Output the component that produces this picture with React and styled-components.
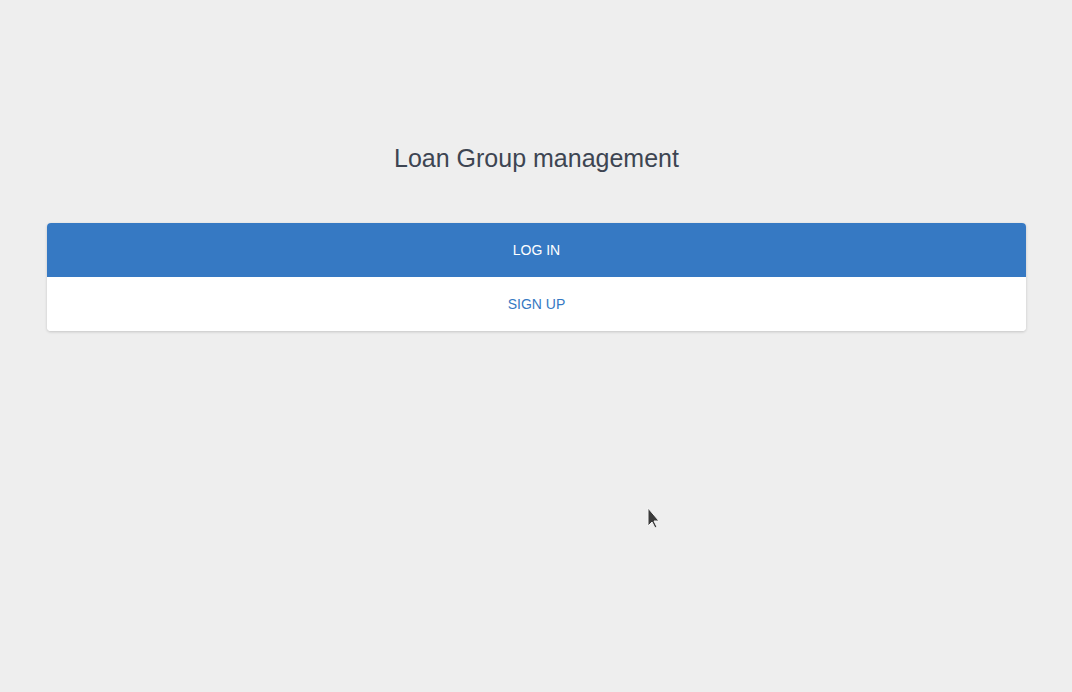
import React from "react";
import styled, { createGlobalStyle } from "styled-components";

const GlobalStyle = createGlobalStyle`
  html, body {
    margin: 0;
    padding: 0;
    background: #eeeeee;
    font-family: "Liberation Sans", Arial, sans-serif;
  }
`;

const Page = styled.div`
  position: relative;
  height: 692px;
  padding: 0 46px 0 47px;
  display: flex;
  flex-direction: column;
  align-items: stretch;
`;

const Title = styled.h1`
  margin: 141px 0 0;
  height: 34px;
  line-height: 34px;
  text-align: center;
  font-size: 25px;
  font-weight: 400;
  color: #3d4552;
`;

const Card = styled.div`
  margin-top: 48px;
  display: flex;
  flex-direction: column;
  background: #ffffff;
  border-radius: 4px;
  overflow: hidden;
  box-shadow: 0 1px 3px rgba(0, 0, 0, 0.18);
`;

const ActionButton = styled.button`
  height: 54px;
  border: none;
  margin: 0;
  padding: 0;
  font-family: inherit;
  font-size: 14px;
  text-transform: uppercase;
  cursor: pointer;
  background: ${(p) => (p.$primary ? "#3679c3" : "#ffffff")};
  color: ${(p) => (p.$primary ? "#ffffff" : "#3679c3")};
`;

const Pointer = styled.svg`
  position: absolute;
  left: 646px;
  top: 506px;
`;

const App = () => {
  return (
    <Page>
      <GlobalStyle />
      <Title>Loan Group management</Title>
      <Card>
        <ActionButton $primary>Log in</ActionButton>
        <ActionButton>Sign up</ActionButton>
      </Card>
      <Pointer width="16" height="24" viewBox="0 0 16 24">
        <path
          d="M2 2 L2 20 L6 16 L9 22 L11 21 L8 15 L13 15 Z"
          fill="#3a3a3a"
          stroke="#f4f4f4"
          strokeWidth="1"
        />
      </Pointer>
    </Page>
  );
};

export default App;
